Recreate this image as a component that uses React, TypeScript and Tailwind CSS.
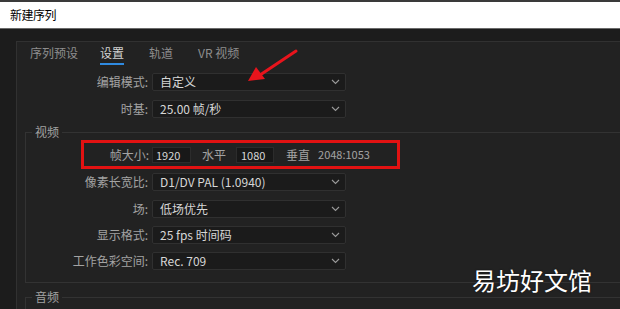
import React from 'react';

const Chevron: React.FC = () => (
  <svg width="9" height="6" viewBox="0 0 9 6" className="shrink-0">
    <polyline points="1,1 4.5,4.5 8,1" fill="none" stroke="#9a9a9a" strokeWidth="1.1" />
  </svg>
);

// one label + dropdown row
const SelectRow: React.FC<{ label: string; value: string; labelW: string; mt?: string }> = ({ label, value, labelW, mt }) => (
  <div className={`flex items-center h-[18px] ${mt ?? ''}`}>
    <div className={`${labelW} text-right text-[12px] leading-[18px] text-[#a3a3a3] pr-[4px]`}>{label}</div>
    <div className="w-[194px] h-[18px] flex items-center justify-between bg-[#1b1b1b] border border-[#303030] rounded-[2px] pl-[7px] pr-[5px]">
      <span className="text-[12px] leading-[16px] text-[#d6d6d6]">{value}</span>
      <Chevron />
    </div>
  </div>
);

const Tab: React.FC<{ label: string; active?: boolean; ml: string }> = ({ label, active, ml }) => (
  <div className={`flex flex-col ${ml}`}>
    <span className={`text-[12px] leading-[16px] ${active ? 'text-[#d2d2d2]' : 'text-[#8e8e8e]'}`}>{label}</span>
    <div className={`h-[2px] mt-[2px] ${active ? 'bg-[#2f8ae0]' : 'bg-transparent'}`} />
  </div>
);

export default function App() {
  return (
    <div
      className="relative w-[620px] h-[309px] overflow-hidden bg-[#1c1c1c]"
      style={{ fontFamily: '"Noto Sans CJK SC", "Noto Sans", sans-serif' }}
    >
      {/* Title bar */}
      <div className="h-[29px] bg-white border-t-2 border-[#3a3a3a] border-b border-b-[#6a6a6a] flex items-center pl-[10px]">
        <span className="text-[12px] text-black tracking-[-0.5px]">新建序列</span>
      </div>

      {/* Main panel */}
      <div className="pt-[12px] pl-[16px]">
        <div className="border-l border-t border-[#313131] bg-[#222222] h-[300px]">
          {/* Tabs */}
          <div className="flex pt-[3px] pl-[13px]">
            <Tab label="序列预设" ml="ml-0" />
            <Tab label="设置" active ml="ml-[22px]" />
            <Tab label="轨道" ml="ml-[25px]" />
            <Tab label="VR 视频" ml="ml-[25px]" />
          </div>

          <SelectRow label="编辑模式:" value="自定义" labelW="w-[135px]" mt="mt-[8px]" />
          <SelectRow label="时基:" value="25.00  帧/秒" labelW="w-[135px]" mt="mt-[9px]" />

          {/* 视频 */}
          <fieldset className="ml-[8px] mt-[6px] border-l border-t border-b border-[#333333] pb-[12px]">
            <legend className="ml-[6px] px-[3px] text-[12px] leading-[16px] text-[#a3a3a3]">视频</legend>
            <div className="ml-[55px] mt-[0px] w-[319px] h-[29px] border-[3px] border-[#e21212] flex items-center">
              <div className="w-[65px] text-right text-[12px] text-[#a3a3a3]">帧大小:</div>
              <div className="ml-[3px] w-[39px] h-[16px] bg-[#181818] border border-[#2c2c2c] text-[11px] leading-[14px] text-[#d6d6d6] pl-[3px]">1920</div>
              <div className="ml-[11px] text-[12px] text-[#a3a3a3]">水平</div>
              <div className="ml-[10px] w-[38px] h-[16px] bg-[#181818] border border-[#2c2c2c] text-[11px] leading-[14px] text-[#d6d6d6] pl-[4px]">1080</div>
              <div className="ml-[12px] text-[12px] text-[#a3a3a3]">垂直</div>
              <div className="ml-[8px] text-[11px] text-[#a3a3a3]">2048:1053</div>
            </div>
            <SelectRow label="像素长宽比:" value="D1/DV PAL (1.0940)" labelW="w-[126px]" mt="mt-[4px]" />
            <SelectRow label="场:" value="低场优先" labelW="w-[126px]" mt="mt-[9px]" />
            <SelectRow label="显示格式:" value="25 fps 时间码" labelW="w-[126px]" mt="mt-[8px]" />
            <SelectRow label="工作色彩空间:" value="Rec. 709" labelW="w-[126px]" mt="mt-[8px]" />
          </fieldset>

          {/* 音频 */}
          <fieldset className="ml-[8px] mt-[6px] border-l border-t border-[#333333] h-[40px]">
            <legend className="ml-[6px] px-[3px] text-[12px] leading-[16px] text-[#a3a3a3]">音频</legend>
          </fieldset>
        </div>
      </div>

      {/* Red annotation arrow */}
      <svg className="absolute left-[240px] top-[44px]" width="70" height="44" viewBox="0 0 70 44">
        <line x1="56" y1="7" x2="20" y2="31" stroke="#e8141c" strokeWidth="3" strokeLinecap="round" />
        <polygon points="8,37 16,23 25,35" fill="#e8141c" />
      </svg>

      {/* Watermark */}
      <div className="absolute left-[472px] top-[264px] text-[24px] leading-[32px] text-white tracking-[0px] [text-shadow:0_0_2px_rgba(0,0,0,0.6)]">
        易坊好文馆
      </div>
    </div>
  );
}
